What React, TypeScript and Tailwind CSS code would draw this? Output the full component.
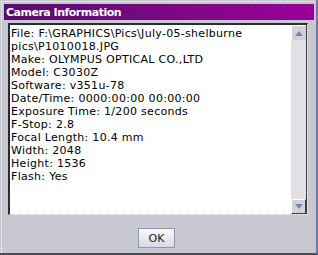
import React from 'react'

const LINES = [
  'File: F:\\GRAPHICS\\Pics\\July-05-shelburne',
  'pics\\P1010018.JPG',
  'Make: OLYMPUS OPTICAL CO.,LTD',
  'Model: C3030Z',
  'Software: v351u-78',
  'Date/Time: 0000:00:00 00:00:00',
  'Exposure Time: 1/200 seconds',
  'F-Stop: 2.8',
  'Focal Length: 10.4 mm',
  'Width: 2048',
  'Height: 1536',
  'Flash: Yes',
]

function ScrollButton({ dir }: { dir: 'up' | 'down' }) {
  return (
    <div
      className={`h-[15px] flex items-center justify-center bg-[#d2d2da] border-t border-l border-white ${
        dir === 'down' ? 'border-r border-b border-r-[#3a3a44] border-b-[#3a3a44]' : ''
      }`}
    >
      <svg width="8" height="5" viewBox="0 0 8 5">
        {dir === 'up' ? (
          <polygon points="0,5 8,5 4,0" fill="#7584a8" />
        ) : (
          <polygon points="0,0 8,0 4,5" fill="#7584a8" />
        )}
      </svg>
    </div>
  )
}

export default function App() {
  return (
    <div className="w-[318px] h-[255px] bg-[#c8c8d0] border-r-2 border-r-[#6a7aa2] border-b-2 border-b-[#4a4a58] pt-px pl-px flex font-['DejaVu_Sans',sans-serif]">
      <div className="flex-1 flex flex-col border-t border-l border-dotted border-white">
        {/* Title */}
        <div className="mt-[2px] mx-[2px] h-[16px] flex items-center pl-[2px] bg-linear-to-r from-[#5a0a6c] to-[#990099]">
          <span className="text-[11px] font-bold text-white tracking-[-0.5px] leading-none">
            Camera Information
          </span>
        </div>

        {/* Info box */}
        <div className="ml-[6px] mt-[3px] w-[300px] h-[192px] flex border-t-2 border-l-2 border-t-[#2a2a32] border-l-[#2a2a32] border-r border-b border-r-white border-b-white [border-right-style:dotted] [border-bottom-style:dotted]">
          <div className="flex-1 bg-white pl-[1px] pt-[2px] text-[11px] leading-[13px] tracking-[0.3px] text-black">
            {LINES.map((l) => (
              <div key={l} className="whitespace-nowrap">
                {l}
              </div>
            ))}
          </div>
          <div className="w-[16px] flex flex-col bg-[#e2e0e4] border-r border-r-[#3a3a44]">
            <ScrollButton dir="up" />
            <div className="flex-1" />
            <ScrollButton dir="down" />
          </div>
        </div>

        {/* Buttons */}
        <div className="flex-1 flex items-start justify-center pt-[13px] pr-[5px]">
          <button className="w-[37px] h-[20px] text-[11px] text-[#222] border border-[#8e96b4] bg-linear-to-b from-[#fafafc] to-[#d8d8e4] leading-none">
            OK
          </button>
        </div>
      </div>
    </div>
  )
}
